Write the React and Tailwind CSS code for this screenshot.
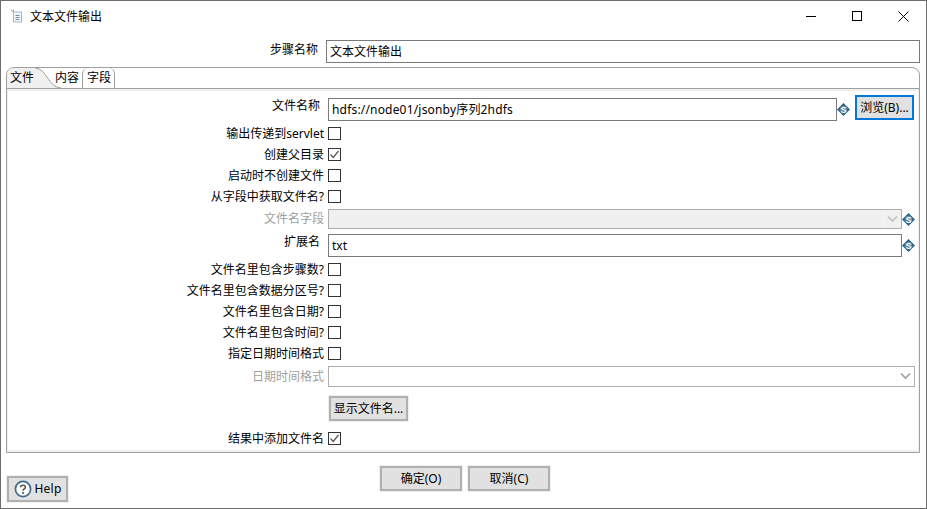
import React from "react";

const labelCls = "w-[320px] shrink-0 text-right pr-[4px]";
const topLabelCls = "w-[320px] shrink-0 text-right pr-[8px] pb-[8px]";

const VarIcon = () => (
  <svg width="13" height="13" viewBox="0 0 13 13" className="shrink-0">
    <path d="M6.5 0 L13 6.5 L6.5 13 L0 6.5 Z" fill="#2f6288" />
    <circle cx="6.5" cy="6.5" r="3.8" fill="#5f8aa8" />
    <text x="6.5" y="9.5" textAnchor="middle" fontSize="8.5" fontWeight="700" fill="#ffffff" fontFamily="Liberation Sans, sans-serif">S</text>
  </svg>
);

const Check = ({ checked }) => (
  <div className="w-[13px] h-[13px] border border-[#333333] bg-white shrink-0 flex items-center justify-center">
    {checked && (
      <svg width="11" height="11" viewBox="0 0 11 11">
        <path d="M1.5 5.5 L4.2 8.5 L9.5 2" fill="none" stroke="#555555" strokeWidth="1.2" />
      </svg>
    )}
  </div>
);

const CheckRow = ({ label, checked }) => (
  <div className="h-[21px] flex items-center">
    <div className={labelCls}>{label}</div>
    <Check checked={checked} />
  </div>
);

const Chevron = ({ color }) => (
  <div className="w-[18px] h-full border-l border-[#f8f8f8] shrink-0">
    <svg width="17" height="18" viewBox="0 0 17 18">
      <path d="M4 6.5 L8.5 11 L13 6.5" fill="none" stroke={color} strokeWidth="1.6" />
    </svg>
  </div>
);

const Button = ({ children, className, focused }) => (
  <button className={`h-[25px] bg-[#e1e1e1] border-2 ${focused ? "border-[#0078d7]" : "border-[#b0b0b0] outline outline-1 outline-[#f0f0f0]"} text-[12px] text-black flex items-center justify-center ${className}`}>
    {children}
  </button>
);

const FileIcon = () => (
  <svg width="14" height="14" viewBox="0 0 14 14" className="shrink-0">
    <path d="M4.5 3 H11.5 V13 H3.5 V4 Z" fill="#f4f8fb" stroke="#9fb6c8" />
    <path d="M5.5 6.5 H9.5 M5.5 8.5 H9.5 M5.5 10.5 H9.5" stroke="#6f8ea6" />
    <path d="M1 1 L3.5 3 M3.5 0.5 V3" stroke="#8fa5b6" />
  </svg>
);

const HelpIcon = () => (
  <svg width="18" height="18" viewBox="0 0 18 18" className="shrink-0">
    <circle cx="9" cy="9" r="7.6" fill="#ffffff" stroke="#3f6b8f" strokeWidth="1.7" />
    <path d="M6.6 7.2 C6.6 4.6 11.4 4.6 11.4 7.2 C11.4 9 9 8.8 9 10.8" fill="none" stroke="#555555" strokeWidth="1.6" />
    <rect x="8.1" y="12" width="1.8" height="1.8" fill="#555555" />
  </svg>
);

export default function App() {
  return (
    <div className="w-[927px] h-[509px] bg-white border border-[#6d6d6d] flex flex-col overflow-hidden text-[12px] text-black font-['Noto_Sans','Noto_Sans_CJK_SC',sans-serif]">
      {/* title bar */}
      <div className="h-[30px] shrink-0 flex items-center pl-[9px]">
        <FileIcon />
        <span className="ml-[6px] pt-[1px]">文本文件输出</span>
        <div className="ml-auto flex items-center">
          <div className="w-[46px] h-[30px] flex items-center justify-center">
            <div className="w-[10px] h-px bg-black" />
          </div>
          <div className="w-[46px] h-[30px] flex items-center justify-center">
            <div className="w-[10px] h-[10px] border border-black" />
          </div>
          <div className="w-[46px] h-[30px] flex items-center justify-center">
            <svg width="11" height="11" viewBox="0 0 11 11">
              <path d="M0.5 0.5 L10.5 10.5 M10.5 0.5 L0.5 10.5" stroke="#000000" strokeWidth="1" />
            </svg>
          </div>
        </div>
      </div>

      {/* step name */}
      <div className="h-[23px] mt-[9px] shrink-0 flex items-center pr-[6px]">
        <div className="w-[325px] shrink-0 text-right pr-[8px] pb-[4px]">步骤名称</div>
        <div className="flex-1 h-[23px] border border-[#7a7a7a] px-[3px] flex items-center">文本文件输出</div>
      </div>

      {/* tab folder */}
      <div className="mt-[4px] ml-[5px] mr-[6px] h-[386px] shrink-0 border border-[#a0a0a0] rounded-t-[8px] flex flex-col">
        <div className="relative h-[21px] shrink-0 flex border-b border-[#a0a0a0]">
          <div className="w-[28px] h-[20px] bg-[#f0f0f0] rounded-tl-[7px] pl-[3px] flex items-center">文件</div>
          <svg width="26" height="20" viewBox="0 0 26 20" className="absolute left-[28px] top-0">
            <path d="M0 0 C12 0 13 20 26 20 L0 20 Z" fill="#f0f0f0" />
            <path d="M0 0 C12 0 13 20 26 20" fill="none" stroke="#a0a0a0" />
          </svg>
          <div className="absolute left-[48px] top-0 w-[28px] h-[20px] flex items-center">内容</div>
          <div className="absolute left-[75px] top-0 w-[33px] h-[20px] border-l border-r border-[#a0a0a0] rounded-t-[6px] pl-[4px] flex items-center">字段</div>
        </div>

        <div className="flex-1 border-t-[2px] border-b-[2px] border-x-[1px] border-[#f0f0f0] flex flex-col pt-[6px]">
          <div className="h-[26px] flex items-start">
            <div className={`${topLabelCls} h-[25px] flex items-center justify-end`}>文件名称</div>
            <div className="w-[509px] h-[23px] mt-px border border-[#7a7a7a] px-[3px] flex items-center tracking-[0.18px] shrink-0">hdfs://node01/jsonby序列2hdfs</div>
            <div className="mt-[6px]"><VarIcon /></div>
            <Button focused className="w-[59px] ml-[5px] mt-[-2px]">浏览(B)...</Button>
          </div>
          <CheckRow label="输出传递到servlet" />
          <CheckRow label="创建父目录" checked />
          <CheckRow label="启动时不创建文件" />
          <CheckRow label="从字段中获取文件名?" />
          <div className="h-[22px] mt-[1px] flex items-center">
            <div className={`${labelCls} text-[#a0a0a0]`}>文件名字段</div>
            <div className="w-[574px] h-[20px] bg-[#f0f0f0] border border-[#adadad] flex justify-end">
              <Chevron color="#c0c0c0" />
            </div>
            <VarIcon />
          </div>
          <div className="h-[27px] mt-[2px] flex items-center">
            <div className={topLabelCls}>扩展名</div>
            <div className="w-[574px] h-[23px] border border-[#7a7a7a] px-[3px] flex items-center">txt</div>
            <VarIcon />
          </div>
          <CheckRow label="文件名里包含步骤数?" />
          <CheckRow label="文件名里包含数据分区号?" />
          <CheckRow label="文件名里包含日期?" />
          <CheckRow label="文件名里包含时间?" />
          <CheckRow label="指定日期时间格式" />
          <div className="h-[23px] mt-[1px] flex items-center">
            <div className={`${labelCls} text-[#a0a0a0]`}>日期时间格式</div>
            <div className="w-[587px] h-[21px] border border-[#adadad] flex justify-end">
              <Chevron color="#a0a0a0" />
            </div>
          </div>
          <div className="h-[40px] pt-[1px] flex items-center pl-[321px]">
            <Button className="w-[79px]">显示文件名...</Button>
          </div>
          <CheckRow label="结果中添加文件名" checked />
        </div>
      </div>

      {/* bottom buttons */}
      <div className="relative flex-1 flex justify-center gap-[6px] pt-[13px] pl-[3px]">
        <Button className="w-[82px]">确定(O)</Button>
        <Button className="w-[82px]">取消(C)</Button>
        <Button className="absolute left-[6px] top-[23px] w-[61px] h-[26px] gap-[3px]">
          <HelpIcon />
          <span className="tracking-[0.2px]">Help</span>
        </Button>
      </div>
    </div>
  );
}
